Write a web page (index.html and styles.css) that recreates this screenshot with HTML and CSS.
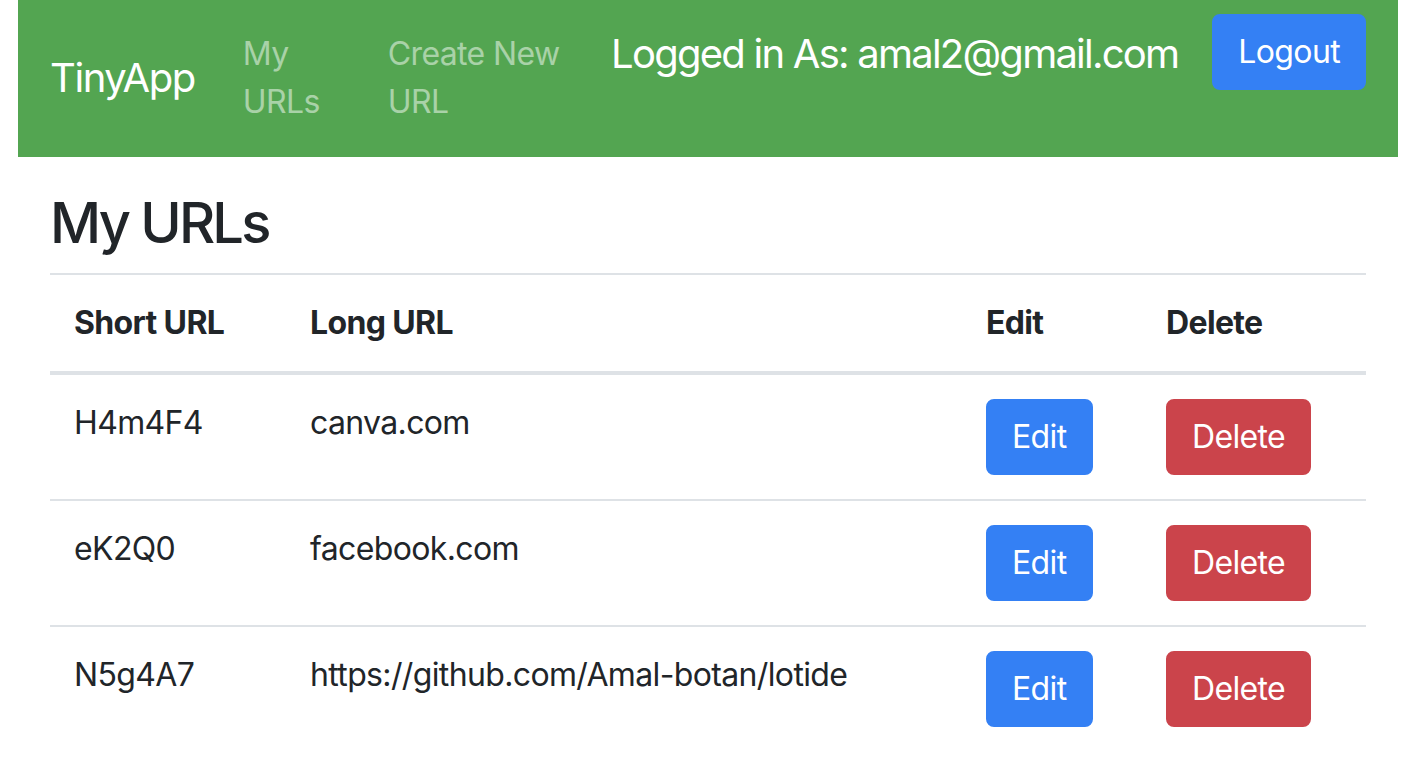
FILE: index.html
```html
<!DOCTYPE html>
<html lang="en">
<head>
<meta charset="utf-8">
<title>TinyApp</title>
<link rel="stylesheet" href="styles.css">
</head>
<body>
<div class="page">
  <nav class="navbar">
    <a class="brand" href="#">TinyApp</a>
    <ul class="nav">
      <li class="nav-item item-1"><a class="nav-link" href="#">My URLs</a></li>
      <li class="nav-item item-2"><a class="nav-link" href="#">Create New URL</a></li>
    </ul>
    <div class="user">
      <span class="user-label">Logged in As: amal2@gmail.com</span>
      <button class="btn btn-primary" type="button">Logout</button>
    </div>
  </nav>
  <main class="container">
    <h3 class="title">My URLs</h3>
    <table class="table">
      <colgroup>
        <col class="col-short">
        <col class="col-long">
        <col class="col-edit">
        <col class="col-delete">
      </colgroup>
      <thead>
        <tr><th>Short URL</th><th>Long URL</th><th>Edit</th><th>Delete</th></tr>
      </thead>
      <tbody>
        <tr>
          <td>H4m4F4</td><td>canva.com</td>
          <td><button class="btn btn-primary" type="button">Edit</button></td>
          <td><button class="btn btn-danger" type="button">Delete</button></td>
        </tr>
        <tr>
          <td>eK2Q0</td><td>facebook.com</td>
          <td><button class="btn btn-primary" type="button">Edit</button></td>
          <td><button class="btn btn-danger" type="button">Delete</button></td>
        </tr>
        <tr>
          <td>N5g4A7</td><td>https://github.com/Amal-botan/lotide</td>
          <td><button class="btn btn-primary" type="button">Edit</button></td>
          <td><button class="btn btn-danger" type="button">Delete</button></td>
        </tr>
      </tbody>
    </table>
  </main>
</div>
</body>
</html>
```

FILE: styles.css
```css
* { box-sizing: border-box; }

html, body {
  margin: 0;
  padding: 0;
  background: #fff;
}

body {
  font-family: Inter, "Liberation Sans", sans-serif;
  font-size: 32px;
  line-height: 1.5;
  letter-spacing: -0.02em;
  color: #212529;
}

.page {
  margin-left: 18px;
  width: 1380px;
}

.navbar {
  display: flex;
  align-items: flex-start;
  background: #53a551;
  padding: 14px 32px 15px;
  min-height: 157px;
}

.brand {
  flex: none;
  align-self: center;
  color: #fff;
  text-decoration: none;
  font-size: 40px;
  line-height: 60px;
  letter-spacing: -0.036em;
  padding: 10px 0;
  margin-right: 32px;
  white-space: nowrap;
}

.nav {
  flex: none;
  display: flex;
  list-style: none;
  margin: 0;
  padding: 0;
  align-self: center;
}

.item-1 { width: 145px; }
.item-2 { width: 218px; }

.nav-link {
  display: block;
  padding: 16px;
  line-height: 48px;
  color: rgba(255, 255, 255, 0.5);
  text-decoration: none;
}

.user {
  display: flex;
  align-items: center;
  margin-left: auto;
  gap: 34px;
}

.user-label {
  color: #fff;
  font-size: 40px;
  line-height: 60px;
  letter-spacing: -0.044em;
  white-space: nowrap;
  padding-top: 4px;
}

.btn {
  font-family: inherit;
  font-size: 32px;
  line-height: 48px;
  letter-spacing: -0.02em;
  padding: 12px 24px;
  border: 2px solid transparent;
  border-radius: 8px;
  color: #fff;
  cursor: pointer;
}

.btn-primary {
  background: #3480f4;
  border-color: #3480f4;
}

.btn-danger {
  background: #cb444b;
  border-color: #cb444b;
}

.container {
  padding: 33px 32px 0;
}

.title {
  margin: 0 0 16px;
  font-size: 56px;
  line-height: 1.2;
  font-weight: 500;
  letter-spacing: -0.05em;
}

.table {
  width: 100%;
  border-collapse: collapse;
  table-layout: fixed;
}

.col-short { width: 236px; }
.col-edit { width: 180px; }
.col-delete { width: 224px; }

.table th,
.table td {
  padding: 24px;
  text-align: left;
  vertical-align: top;
  border-top: 2px solid #dee2e6;
}

.table th {
  font-weight: 700;
  border-bottom: 4px solid #dee2e6;
}
```
